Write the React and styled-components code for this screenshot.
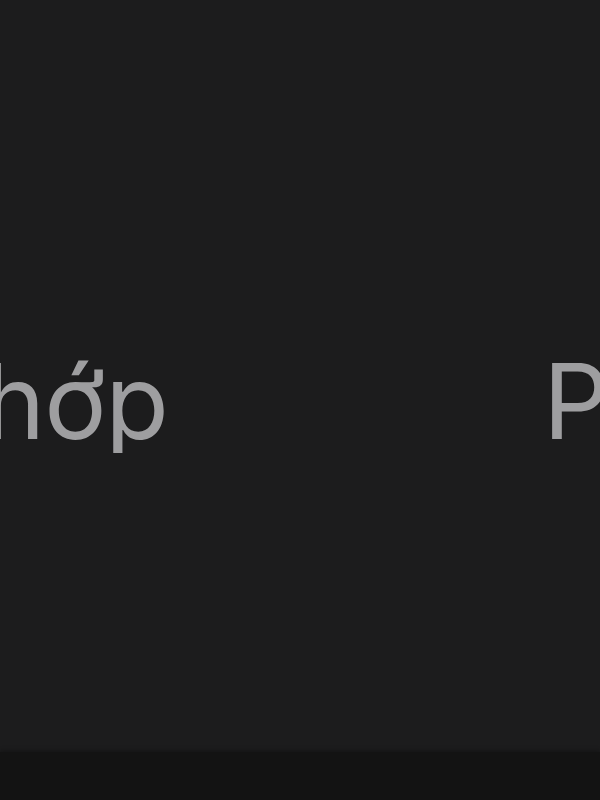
import React from 'react';
import styled, { createGlobalStyle } from 'styled-components';

const GlobalStyle = createGlobalStyle`
  html, body {
    margin: 0;
    padding: 0;
    background: #1c1c1d;
  }
  #root {
    height: 800px;
  }
`;

const Screen = styled.div`
  display: flex;
  flex-direction: column;
  width: 600px;
  height: 800px;
  overflow: hidden;
  background: #1c1c1d;
  font-family: Inter, 'Noto Sans', sans-serif;
`;

const Content = styled.div`
  flex: 1;
  padding-top: 349px;
`;

const TabRow = styled.div`
  display: flex;
  align-items: flex-start;
  overflow: hidden;
`;

const Tab = styled.div`
  display: flex;
  justify-content: ${({ $alignEnd }) => ($alignEnd ? 'flex-end' : 'flex-start')};
  flex-shrink: 0;
  width: ${({ $width }) => $width}px;
  margin-left: ${({ $offset }) => $offset || 0}px;
  overflow: hidden;
  white-space: nowrap;
  font-size: 104px;
  line-height: 1;
  font-weight: 400;
  letter-spacing: -1px;
  color: #9e9ea0;
`;

const BottomBar = styled.div`
  height: 48px;
  background: #131313;
  box-shadow: 0 -2px 4px rgba(0, 0, 0, 0.25);
`;

export default function App() {
  return (
    <>
      <GlobalStyle />
      <Screen>
        <Content>
          <TabRow>
            <Tab $alignEnd $width={168}>
              Khớp
            </Tab>
            <Tab $width={300} $offset={375}>
              Phù
            </Tab>
          </TabRow>
        </Content>
        <BottomBar />
      </Screen>
    </>
  );
}
